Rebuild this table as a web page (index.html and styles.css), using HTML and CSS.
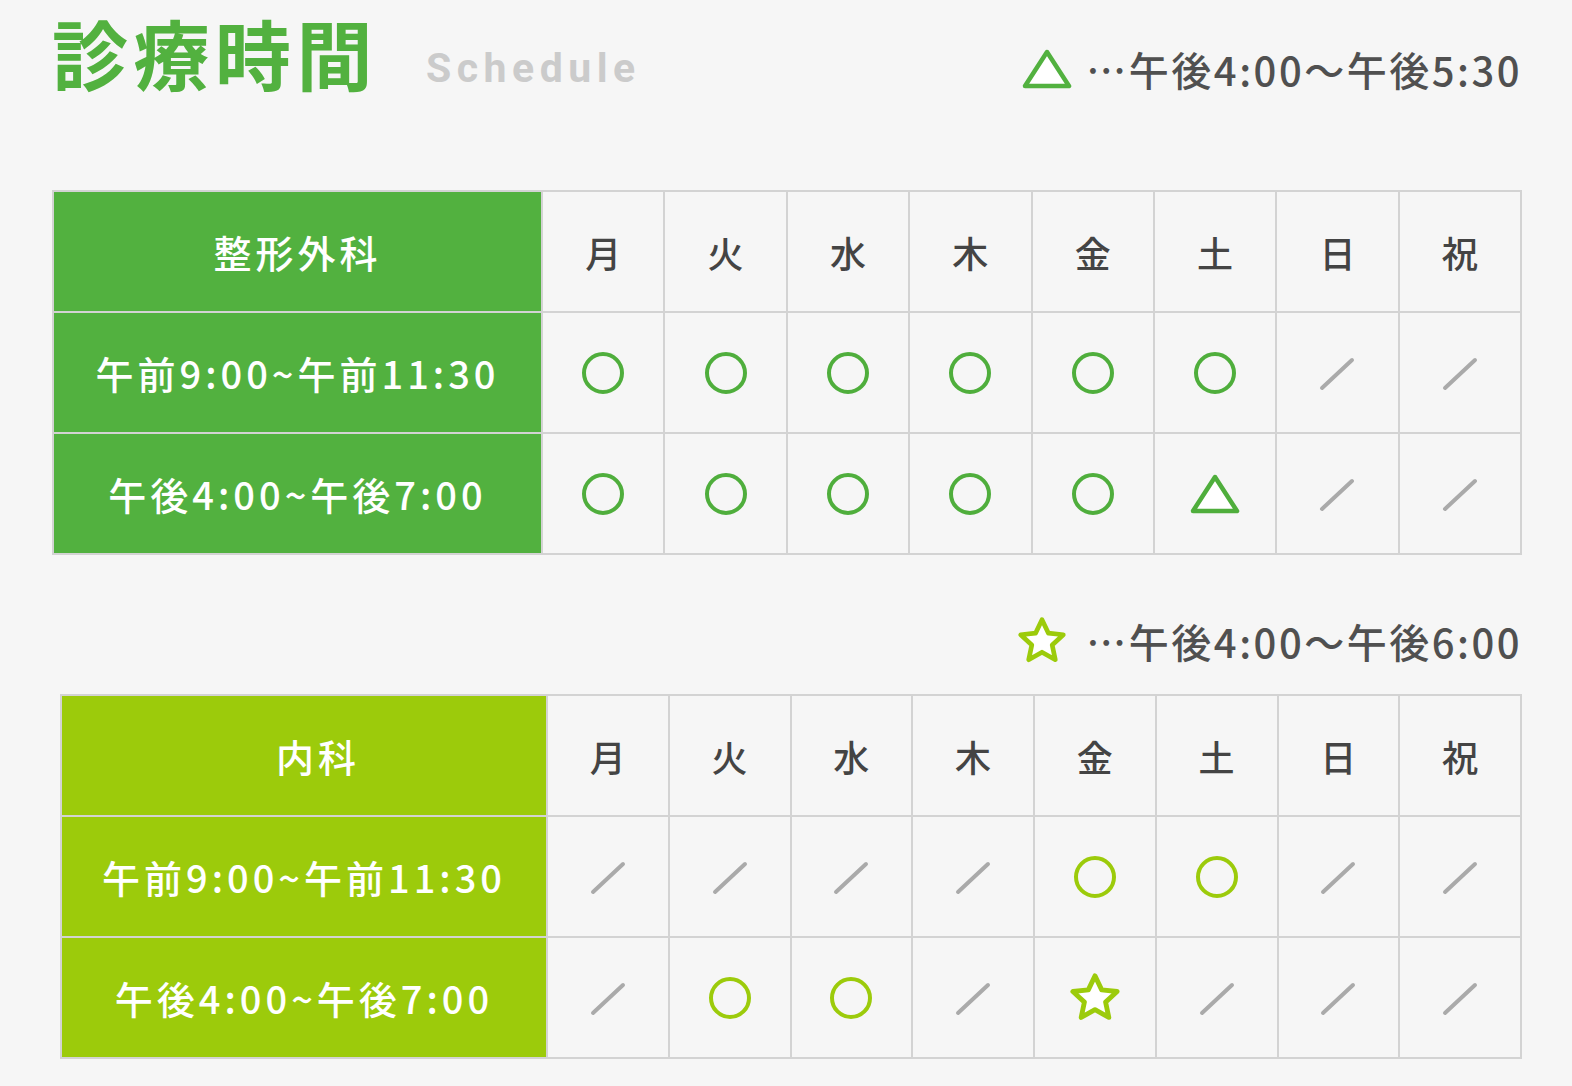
FILE: index.html
```html
<!DOCTYPE html>
<html lang="ja">
<head>
<meta charset="utf-8">
<title>診療時間</title>
<link rel="stylesheet" href="styles.css">
</head>
<body>
<svg width="0" height="0" class="defs" aria-hidden="true">
  <defs>
    <symbol id="i-circle" viewBox="0 0 46 46"><circle cx="23" cy="23" r="19" fill="none" stroke="currentColor" stroke-width="4"/></symbol>
    <symbol id="i-tri" viewBox="0 0 50 42"><polygon points="25,4 47,38 3,38" fill="#fff" stroke="currentColor" stroke-width="4.5" stroke-linejoin="round"/></symbol>
    <symbol id="i-slash" viewBox="0 0 40 40"><line x1="5" y1="35" x2="35" y2="7" stroke="#aaaaaa" stroke-width="4" stroke-linecap="round"/></symbol>
    <symbol id="i-star" viewBox="0 0 50 50"><polygon points="25,4.5 31.2,17.5 45.5,19 34.8,28.8 37.8,43 25,35.8 12.2,43 15.2,28.8 4.5,19 18.8,17.5" fill="#fff" stroke="currentColor" stroke-width="4.5" stroke-linejoin="round"/></symbol>
  </defs>
</svg>
<main class="schedule">
  <header class="head">
    <h1 class="title">診療時間<span class="sub">Schedule</span></h1>
    <p class="legend legend-tri"><svg class="lg-icon tri-lg"><use href="#i-tri"/></svg>…午後4:00～午後5:30</p>
  </header>

  <table class="tbl tbl-ortho">
    <tr>
      <th class="dept">整形外科</th>
      <td class="day">月</td><td class="day">火</td><td class="day">水</td><td class="day">木</td><td class="day">金</td><td class="day">土</td><td class="day">日</td><td class="day">祝</td>
    </tr>
    <tr>
      <th class="time">午前9:00~午前11:30</th>
      <td><svg class="ic ic-c"><use href="#i-circle"/></svg></td>
      <td><svg class="ic ic-c"><use href="#i-circle"/></svg></td>
      <td><svg class="ic ic-c"><use href="#i-circle"/></svg></td>
      <td><svg class="ic ic-c"><use href="#i-circle"/></svg></td>
      <td><svg class="ic ic-c"><use href="#i-circle"/></svg></td>
      <td><svg class="ic ic-c"><use href="#i-circle"/></svg></td>
      <td><svg class="ic ic-s"><use href="#i-slash"/></svg></td>
      <td><svg class="ic ic-s"><use href="#i-slash"/></svg></td>
    </tr>
    <tr>
      <th class="time">午後4:00~午後7:00</th>
      <td><svg class="ic ic-c"><use href="#i-circle"/></svg></td>
      <td><svg class="ic ic-c"><use href="#i-circle"/></svg></td>
      <td><svg class="ic ic-c"><use href="#i-circle"/></svg></td>
      <td><svg class="ic ic-c"><use href="#i-circle"/></svg></td>
      <td><svg class="ic ic-c"><use href="#i-circle"/></svg></td>
      <td><svg class="ic ic-t"><use href="#i-tri"/></svg></td>
      <td><svg class="ic ic-s"><use href="#i-slash"/></svg></td>
      <td><svg class="ic ic-s"><use href="#i-slash"/></svg></td>
    </tr>
  </table>

  <p class="legend legend-star"><svg class="lg-icon star-lg"><use href="#i-star"/></svg>…午後4:00～午後6:00</p>

  <table class="tbl tbl-int">
    <tr>
      <th class="dept">内科</th>
      <td class="day">月</td><td class="day">火</td><td class="day">水</td><td class="day">木</td><td class="day">金</td><td class="day">土</td><td class="day">日</td><td class="day">祝</td>
    </tr>
    <tr>
      <th class="time">午前9:00~午前11:30</th>
      <td><svg class="ic ic-s"><use href="#i-slash"/></svg></td>
      <td><svg class="ic ic-s"><use href="#i-slash"/></svg></td>
      <td><svg class="ic ic-s"><use href="#i-slash"/></svg></td>
      <td><svg class="ic ic-s"><use href="#i-slash"/></svg></td>
      <td><svg class="ic ic-c"><use href="#i-circle"/></svg></td>
      <td><svg class="ic ic-c"><use href="#i-circle"/></svg></td>
      <td><svg class="ic ic-s"><use href="#i-slash"/></svg></td>
      <td><svg class="ic ic-s"><use href="#i-slash"/></svg></td>
    </tr>
    <tr>
      <th class="time">午後4:00~午後7:00</th>
      <td><svg class="ic ic-s"><use href="#i-slash"/></svg></td>
      <td><svg class="ic ic-c"><use href="#i-circle"/></svg></td>
      <td><svg class="ic ic-c"><use href="#i-circle"/></svg></td>
      <td><svg class="ic ic-s"><use href="#i-slash"/></svg></td>
      <td><svg class="ic ic-st"><use href="#i-star"/></svg></td>
      <td><svg class="ic ic-s"><use href="#i-slash"/></svg></td>
      <td><svg class="ic ic-s"><use href="#i-slash"/></svg></td>
      <td><svg class="ic ic-s"><use href="#i-slash"/></svg></td>
    </tr>
  </table>
</main>
</body>
</html>
```

FILE: styles.css
```css
html, body {
  margin: 0;
  padding: 0;
  background: #f6f6f6;
}
body {
  font-family: "Noto Sans CJK JP", "Noto Sans", sans-serif;
  color: #4a4a4a;
}
.defs {
  position: absolute;
  width: 0;
  height: 0;
  overflow: hidden;
}
.schedule {
  width: 1572px;
  height: 1086px;
  box-sizing: border-box;
  padding: 0 50px 0 52px;
}
.head {
  display: flex;
  justify-content: space-between;
  align-items: flex-start;
  height: 100px;
}
.title {
  margin: 14px 0 0 0;
  font-size: 76px;
  line-height: 1;
  font-weight: 700;
  color: #52b13f;
  letter-spacing: 5.5px;
  display: flex;
  align-items: baseline;
}
.sub {
  font-family: Roboto, "Liberation Sans", sans-serif;
  font-size: 41px;
  font-weight: 700;
  color: #cbcbcb;
  letter-spacing: 5.5px;
  margin-left: 48px;
  position: relative;
  top: -3px;
}
.legend {
  margin: 0;
  display: flex;
  align-items: center;
  justify-content: flex-end;
  font-size: 40px;
  font-weight: 500;
  line-height: 56px;
  color: #505050;
  letter-spacing: 2.5px;
}
.legend-tri {
  margin-top: 41px;
  margin-right: 0;
}
.lg-icon {
  width: 50px;
  height: 44px;
  margin-right: 14px;
}
.tri-lg { color: #52b13f; }
.star-lg { color: #9ccb0b; width: 52px; height: 52px; margin-right: 18px; }

.tbl {
  border-collapse: collapse;
  table-layout: fixed;
}
.tbl th, .tbl td {
  border: 2px solid #d3d3d3;
  height: 119px;
  padding: 0;
  text-align: center;
  vertical-align: middle;
}
.tbl-ortho {
  width: 1470px;
  margin-top: 90px;
}
.tbl-int {
  width: 1462px;
  margin-left: 8px;
}
.tbl-ortho .dept, .tbl-ortho .time { width: 487px; }
.tbl-int .dept, .tbl-int .time { width: 484px; }
.tbl-int .dept { text-indent: 28px; }
.dept, .time {
  color: #fff;
  font-weight: 500;
  font-size: 38px;
  letter-spacing: 4px;
}
.tbl-ortho th { background: #52b13f; }
.tbl-int th { background: #9ccb0b; }
.day {
  font-size: 36px;
  font-weight: 500;
  color: #444;
}
.ic {
  display: block;
  margin: 0 auto;
}
.ic-c { width: 46px; height: 46px; }
.ic-t { width: 50px; height: 42px; }
.ic-s { width: 40px; height: 40px; }
.ic-st { width: 54px; height: 54px; }
.tbl-ortho .ic { color: #4fae3c; }
.tbl-int .ic { color: #9ccb0b; }

.legend-star {
  margin: 58px 0 25px 0;
}
```
